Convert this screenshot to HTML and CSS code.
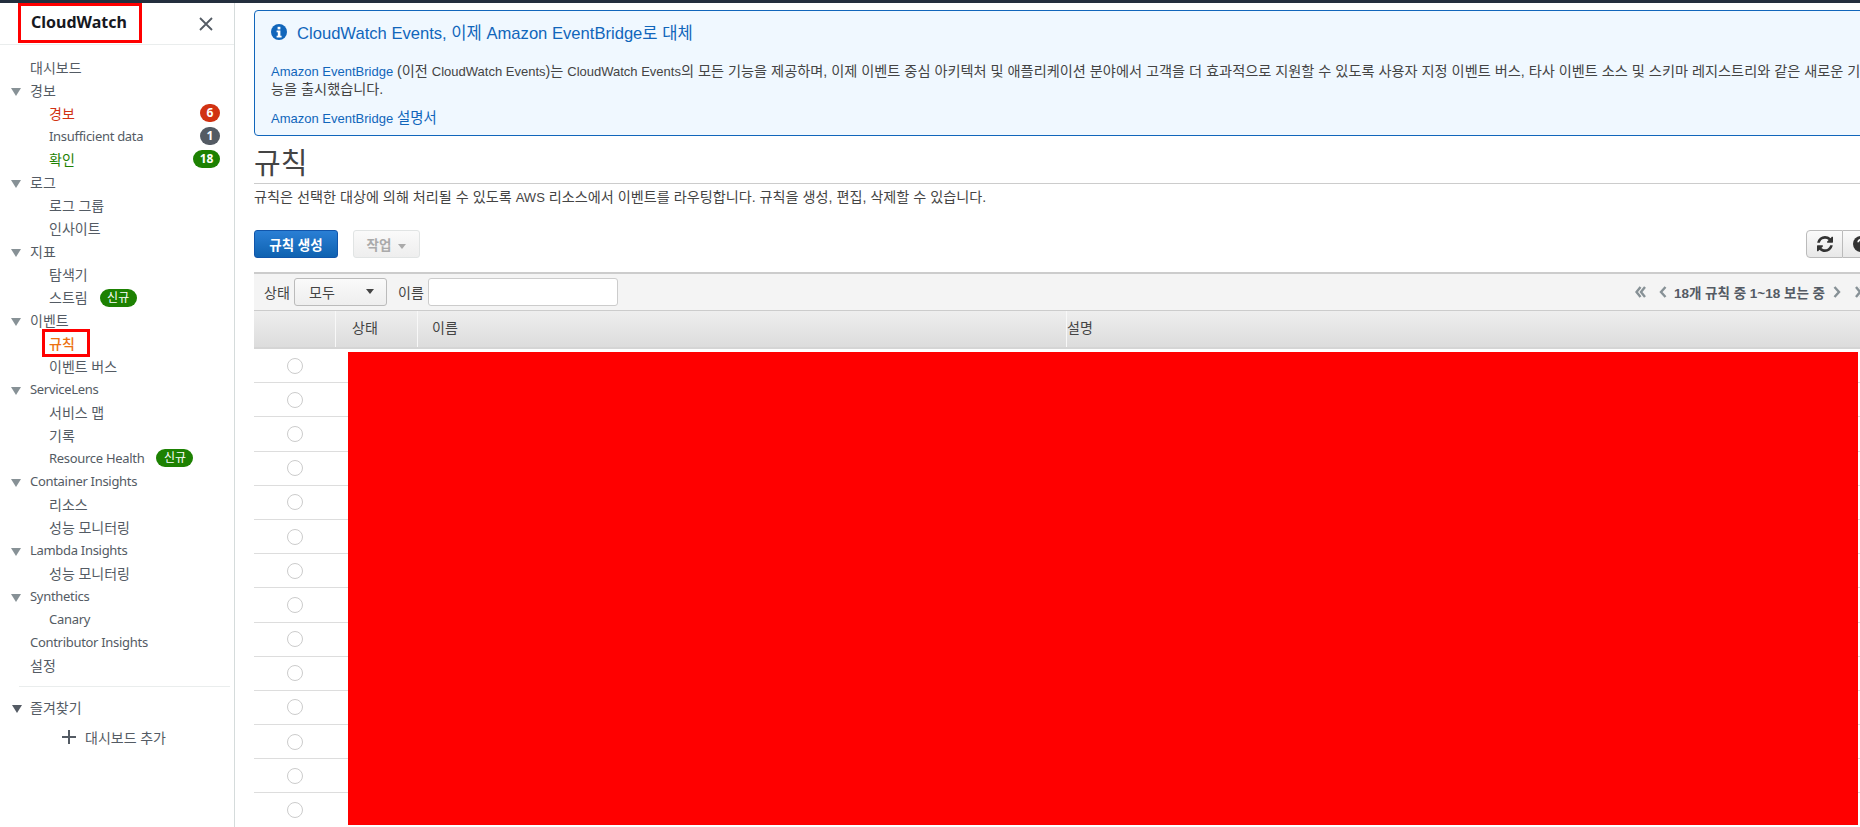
FILE: index.html
```html
<!DOCTYPE html>
<html lang="ko">
<head>
    <meta charset="UTF-8">
    <meta name="viewport" content="width=device-width, initial-scale=1.0">
    <title>CloudWatch 규칙</title>
    <link rel="stylesheet" href="styles.css">
</head>
<body>
    <div class="top-bar"></div>
    <div class="app">
        <nav class="sidebar">
            <div class="side-head">
                <h2 class="side-title">CloudWatch</h2>
                <svg class="side-close" width="14" height="14" viewBox="0 0 14 14"><path d="M1 1l12 12M13 1L1 13" stroke="#545b64" stroke-width="1.8" fill="none"/></svg>
            </div>
            <ul class="nav-list">
                <li class="nav-top">대시보드</li>
                <li class="nav-top nav-open">경보</li>
                <li class="nav-sub nav-red">경보<span class="badge badge-red">6</span></li>
                <li class="nav-sub nav-en">Insufficient data<span class="badge badge-grey">1</span></li>
                <li class="nav-sub nav-green">확인<span class="badge badge-green">18</span></li>
                <li class="nav-top nav-open">로그</li>
                <li class="nav-sub">로그 그룹</li>
                <li class="nav-sub">인사이트</li>
                <li class="nav-top nav-open">지표</li>
                <li class="nav-sub">탐색기</li>
                <li class="nav-sub">스트림<span class="badge-new">신규</span></li>
                <li class="nav-top nav-open">이벤트</li>
                <li class="nav-sub nav-active"><span class="mark">규칙</span></li>
                <li class="nav-sub">이벤트 버스</li>
                <li class="nav-top nav-open nav-en">ServiceLens</li>
                <li class="nav-sub">서비스 맵</li>
                <li class="nav-sub">기록</li>
                <li class="nav-sub nav-en">Resource Health<span class="badge-new">신규</span></li>
                <li class="nav-top nav-open nav-en">Container Insights</li>
                <li class="nav-sub">리소스</li>
                <li class="nav-sub">성능 모니터링</li>
                <li class="nav-top nav-open nav-en">Lambda Insights</li>
                <li class="nav-sub">성능 모니터링</li>
                <li class="nav-top nav-open nav-en">Synthetics</li>
                <li class="nav-sub nav-en">Canary</li>
                <li class="nav-top nav-en">Contributor Insights</li>
                <li class="nav-top">설정</li>
            </ul>
            <hr class="side-rule">
            <div class="fav-head">즐겨찾기</div>
            <div class="fav-add">
                <svg width="14" height="14" viewBox="0 0 14 14"><path d="M7 0v14M0 7h14" stroke="#545b64" stroke-width="2" fill="none"/></svg>
                대시보드 추가
            </div>
        </nav>

        <main class="content">
            <section class="alert">
                <h3 class="alert-title">
                    <svg width="16" height="16" viewBox="0 0 16 16"><circle cx="8" cy="8" r="8" fill="#16b"/><rect x="6.600" y="2.800" width="2.800" height="2.600" fill="#fff"/><path d="M5.600 6.600h3.800v5.200h1.200v1.600H5.600v-1.600h1.200V8.200H5.600z" fill="#fff"/></svg>
                    CloudWatch Events, 이제 Amazon EventBridge로 대체
                </h3>
                <p class="alert-text"><a class="link en">Amazon EventBridge</a> (이전 <span class="en">CloudWatch Events</span>)는 <span class="en">CloudWatch Events</span>의 모든 기능을 제공하며, 이제 이벤트 중심 아키텍처 및 애플리케이션 분야에서 고객을 더 효과적으로 지원할 수 있도록 사용자 지정 이벤트 버스, 타사 이벤트 소스 및 스키마 레지스트리와 같은 새로운 기능을 출시했습니다.</p>
                <p class="alert-link"><a class="link"><span class="en">Amazon EventBridge</span> 설명서</a></p>
            </section>

            <h1 class="page-title">규칙</h1>
            <p class="page-desc">규칙은 선택한 대상에 의해 처리될 수 있도록 <span class="en">AWS</span> 리소스에서 이벤트를 라우팅합니다. 규칙을 생성, 편집, 삭제할 수 있습니다.</p>

            <div class="toolbar">
                <button class="btn-primary">규칙 생성</button>
                <button class="btn-disabled">작업<span class="caret"></span></button>
                <div class="tool-right">
                    <button class="btn-icon">
                        <svg width="16" height="16" viewBox="128 128 1536 1536"><path fill="#333" d="M1639 1056q0 5-1 7-64 268-268 434.500t-478 166.500q-146 0-282.500-55t-243.500-157l-129 129q-19 19-45 19t-45-19-19-45v-448q0-26 19-45t45-19h448q26 0 45 19t19 45-19 45l-137 137q71 66 161 102t187 36q134 0 250-65t186-179q11-17 53-117 8-23 30-23h192q13 0 22.500 9.500t9.500 22.500zm25-800v448q0 26-19 45t-45 19h-448q-26 0-45-19t-19-45 19-45l138-138q-148-137-349-137-134 0-250 65t-186 179q-11 17-53 117-8 23-30 23h-199q-13 0-22.500-9.500t-9.500-22.500v-7q65-268 270-434.500t480-166.500q146 0 284 55.500t245 156.500l130-129q19-19 45-19t45 19 19 45z"/></svg>
                    </button>
                    <button class="btn-icon">
                        <svg width="16" height="16" viewBox="0 0 16 16"><circle cx="8" cy="8" r="8" fill="#333"/><path d="M5.200 6.200a2.800 2.600 0 1 1 4.200 2.200c-.9.6-1.400 1-1.400 2" stroke="#fff" stroke-width="1.800" fill="none"/><rect x="7" y="11.400" width="2" height="2" fill="#fff"/></svg>
                    </button>
                </div>
            </div>

            <div class="filter-bar">
                <label class="filter-label">상태</label>
                <div class="select">모두<span class="caret caret-dark"></span></div>
                <label class="filter-label filter-name">이름</label>
                <input class="filter-input" type="text">
                <div class="pager">
                    <svg class="pager-first" width="11" height="12" viewBox="0 0 11 12"><path d="M5.500 1L1.500 6l4 5M10 1L6 6l4 5" stroke="#879196" stroke-width="2.400" fill="none"/></svg>
                    <svg width="8" height="12" viewBox="0 0 8 12"><path d="M6.500 1L2 6l4.500 5" stroke="#879196" stroke-width="2.400" fill="none"/></svg>
                    <span class="pager-text">18개 규칙 중 1~18 보는 중</span>
                    <svg width="8" height="12" viewBox="0 0 8 12"><path d="M1.500 1L6 6l-4.500 5" stroke="#879196" stroke-width="2.400" fill="none"/></svg>
                    <svg class="pager-last" width="11" height="12" viewBox="0 0 11 12"><path d="M1 1l4 5-4 5M5.500 1l4 5-4 5" stroke="#879196" stroke-width="2.400" fill="none"/></svg>
                </div>
            </div>

            <div class="grid">
                <div class="grid-head">
                    <div class="col-check"></div>
                    <div class="col-state">상태</div>
                    <div class="col-name">이름</div>
                    <div class="col-desc">설명</div>
                </div>
                <div class="grid-row"><span class="radio"></span></div>
                <div class="grid-row"><span class="radio"></span></div>
                <div class="grid-row"><span class="radio"></span></div>
                <div class="grid-row"><span class="radio"></span></div>
                <div class="grid-row"><span class="radio"></span></div>
                <div class="grid-row"><span class="radio"></span></div>
                <div class="grid-row"><span class="radio"></span></div>
                <div class="grid-row"><span class="radio"></span></div>
                <div class="grid-row"><span class="radio"></span></div>
                <div class="grid-row"><span class="radio"></span></div>
                <div class="grid-row"><span class="radio"></span></div>
                <div class="grid-row"><span class="radio"></span></div>
                <div class="grid-row"><span class="radio"></span></div>
                <div class="grid-row"><span class="radio"></span></div>
                <div class="redacted"></div>
            </div>
        </main>
    </div>
</body>
</html>
```

FILE: styles.css
```css
html, body {
    margin: 0;
    height: 827px;
    overflow: hidden;
    background: #fff;
}
body {
    font-family: "Liberation Sans", "Noto Sans CJK KR", sans-serif;
    font-size: 14px;
    color: #444;
}
.en {
    font-size: 13px;
    line-height: 1;
}
.top-bar {
    height: 3px;
    background: #232f3e;
}
.app {
    display: flex;
    height: 824px;
}

/* sidebar */
.sidebar {
    flex: 0 0 234px;
    border-right: 1px solid #d5dbdb;
    font-family: "Noto Sans", "Noto Sans CJK KR", sans-serif;
    font-size: 14px;
    color: #545b64;
}
.side-head {
    display: flex;
    align-items: center;
    justify-content: space-between;
    height: 41px;
    padding: 0 21px 0 18px;
    border-bottom: 1px solid #eaeded;
}
.side-title {
    margin: 0;
    height: 40px;
    width: 124px;
    box-sizing: border-box;
    border: 3px solid #f00;
    padding-left: 10px;
    font-size: 16px;
    line-height: 32px;
    font-weight: 700;
    color: #16191f;
    align-self: flex-start;
}
.nav-list {
    list-style: none;
    margin: 0;
    padding: 11px 0 0;
}
.nav-list li {
    position: relative;
    height: 23px;
    line-height: 23px;
    white-space: nowrap;
}
.nav-list .nav-en {
    font-size: 13px;
    letter-spacing: -0.3px;
}
.nav-top {
    padding-left: 30px;
}
.nav-sub {
    padding-left: 49px;
}
.nav-open::before {
    content: "";
    position: absolute;
    left: 11px;
    top: 9px;
    border-left: 5px solid transparent;
    border-right: 5px solid transparent;
    border-top: 8px solid #879196;
}
.nav-red {
    color: #d13212;
}
.nav-green {
    color: #1d8102;
}
.nav-active {
    color: #ec7211;
    font-weight: 500;
}
.mark {
    position: relative;
    display: inline-block;
    height: 23px;
}
.mark::after {
    content: "";
    position: absolute;
    left: -7px;
    top: -3px;
    width: 42px;
    height: 22px;
    border: 3px solid #f00;
}
.badge {
    position: absolute;
    right: 14px;
    top: 2px;
    min-width: 20px;
    height: 18px;
    border-radius: 9px;
    color: #fff;
    font-size: 12px;
    font-weight: 700;
    letter-spacing: 0;
    line-height: 18px;
    text-align: center;
}
.badge-red {
    background: #d13212;
}
.badge-grey {
    background: #545b64;
}
.badge-green {
    background: #1d8102;
    min-width: 27px;
}
.badge-new {
    display: inline-block;
    width: 37px;
    height: 18px;
    margin-left: 12px;
    border-radius: 9px;
    background: #1d8102;
    color: #fff;
    font-size: 12px;
    letter-spacing: 0;
    line-height: 18px;
    text-align: center;
    vertical-align: 1px;
}
.side-rule {
    margin: 9px 4px 0 19px;
    border: 0;
    border-top: 1px solid #eaeded;
}
.fav-head {
    position: relative;
    margin-top: 9px;
    padding-left: 30px;
    height: 23px;
    line-height: 23px;
}
.fav-head::before {
    content: "";
    position: absolute;
    left: 12px;
    top: 9px;
    border-left: 5px solid transparent;
    border-right: 5px solid transparent;
    border-top: 8px solid #545b64;
}
.fav-add {
    display: flex;
    align-items: center;
    gap: 9px;
    margin-top: 6px;
    padding-left: 62px;
    height: 23px;
}

/* main column runs past the window edge, like the real page */
.content {
    flex: 0 0 1640px;
    box-sizing: border-box;
    padding: 7px 0 0 19px;
}
.alert {
    height: 126px;
    box-sizing: border-box;
    border: 1px solid #16b;
    border-radius: 4px;
    background: #f0f8ff;
    padding: 0 12px 0 16px;
}
.alert-title {
    display: flex;
    align-items: center;
    gap: 10px;
    margin: 10px 0 0;
    height: 22px;
    font-size: 16.6px;
    font-weight: 400;
    color: #16b;
}
.alert-text {
    margin: 19px 0 0;
    font-size: 14.2px;
    line-height: 18px;
}
.alert-link {
    margin: 11px 0 0;
    font-size: 14.4px;
    line-height: 18px;
}
.link {
    color: #16b;
}
.page-title {
    margin: 9px 0 0;
    height: 38px;
    border-bottom: 1px solid #ccc;
    font-size: 29px;
    font-weight: 400;
    line-height: 38px;
    color: #444;
}
.page-desc {
    margin: 4px 0 0;
    font-size: 14.15px;
    line-height: 18px;
}
.toolbar {
    display: flex;
    align-items: flex-start;
    margin-top: 24px;
    height: 42px;
}
.btn-primary {
    width: 84px;
    height: 28px;
    padding: 0;
    border: 1px solid #15a;
    border-radius: 3px;
    background: linear-gradient(#2a7fd5, #0f62b0);
    color: #fff;
    font: 700 13.5px "Liberation Sans", "Noto Sans CJK KR", sans-serif;
}
.btn-disabled {
    width: 67px;
    height: 28px;
    margin-left: 15px;
    padding: 0;
    border: 1px solid #e1e4e4;
    border-radius: 3px;
    background: linear-gradient(#fafafa, #eee);
    color: #aaa;
    font: 700 13.5px "Liberation Sans", "Noto Sans CJK KR", sans-serif;
}
.caret {
    display: inline-block;
    margin-left: 7px;
    vertical-align: 1px;
    border-left: 4px solid transparent;
    border-right: 4px solid transparent;
    border-top: 5px solid #aaa;
}
.caret-dark {
    border-top-color: #444;
    margin-left: auto;
}
.tool-right {
    display: flex;
    margin-left: auto;
    margin-right: -5px;
}
.btn-icon {
    display: flex;
    align-items: center;
    justify-content: center;
    width: 37px;
    height: 28px;
    padding: 0;
    border: 1px solid #bbb;
    background: linear-gradient(#fafafa, #e8e8e8);
}
.btn-icon:first-child {
    border-radius: 4px 0 0 4px;
}
.btn-icon + .btn-icon {
    border-left: 0;
    border-radius: 0 4px 4px 0;
}
.filter-bar {
    display: flex;
    align-items: center;
    height: 35px;
    padding: 0 0 1px 10px;
    border-top: 2px solid #ccc;
    border-bottom: 1px solid #ccc;
    background: #f4f4f4;
}
.filter-label {
    width: 30px;
}
.filter-name {
    margin-left: 11px;
}
.select {
    display: flex;
    align-items: center;
    box-sizing: border-box;
    width: 93px;
    height: 28px;
    padding: 0 12px 0 14px;
    border: 1px solid #bbb;
    border-radius: 3px;
    background: linear-gradient(#fafafa, #eee);
}
.filter-input {
    box-sizing: border-box;
    width: 190px;
    height: 28px;
    margin: 0;
    border: 1px solid #ccc;
    border-radius: 3px;
    background: #fff;
}
.pager {
    display: flex;
    align-items: center;
    flex: none;
    margin-left: auto;
    margin-right: 9px;
    font-size: 13.5px;
    font-weight: 700;
    color: #545b64;
}
.pager-first {
    margin-right: 13px;
}
.pager-text {
    margin: 0 8px 0 7px;
}
.pager-last {
    margin-left: 14px;
}
.grid {
    position: relative;
}
.grid-head {
    display: flex;
    height: 36px;
    line-height: 35px;
    border-bottom: 2px solid #d5d5d5;
    background: linear-gradient(#eee, #dcdcdc);
}
.grid-head > div {
    box-sizing: border-box;
    border-right: 1px solid #f8f8f8;
}
.col-check {
    width: 82px;
}
.col-state {
    width: 82px;
    padding-left: 16px;
}
.col-name {
    width: 649px;
    padding-left: 14px;
}
.grid-head .col-desc {
    flex: 1;
    border-right: 0;
}
.grid-row {
    display: flex;
    align-items: center;
    height: 34.2px;
    box-sizing: border-box;
    border-bottom: 1px solid #ddd;
    padding-left: 33px;
}
.radio {
    width: 14px;
    height: 14px;
    border: 1px solid #ccc;
    border-radius: 50%;
    background: #fff;
}
.redacted {
    position: absolute;
    left: 94px;
    top: 41px;
    width: 1510px;
    height: 473px;
    background: #f00;
}
```
